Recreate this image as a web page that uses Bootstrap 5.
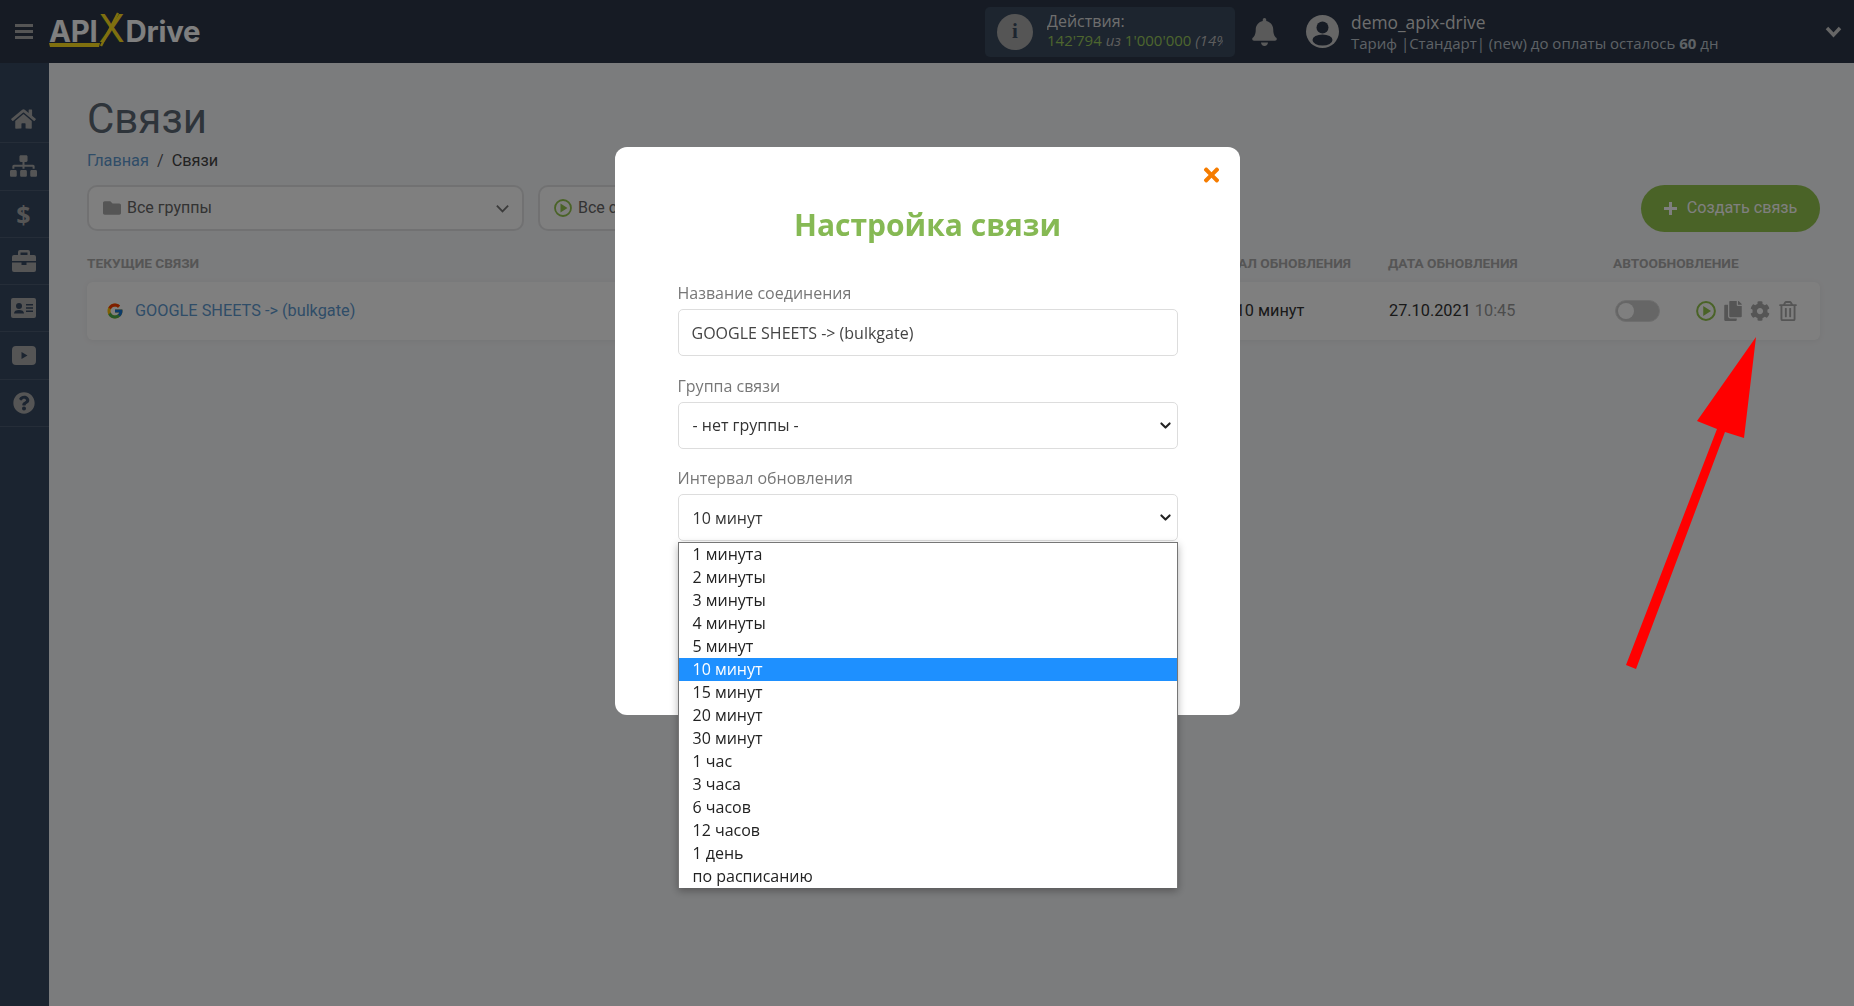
<!DOCTYPE html>
<html lang="ru">
<head>
    <meta charset="UTF-8">
    <title>Связи</title>
    <link href="https://cdn.jsdelivr.net/npm/bootstrap@5.3.0/dist/css/bootstrap.min.css" rel="stylesheet">
    <style>
        body { font-family: Roboto, sans-serif; background: #f7f8fa; height: 1006px; overflow: hidden; }

        /* top bar */
        .top-bar { height: 63px; background: #2c3749; font-family: "Open Sans", sans-serif; }
        .burger { width: 18px; margin-left: 15px; }
        .burger i { display: block; height: 3px; background: #aaa; margin: 3px 0; }
        .logo-box { position: relative; margin-left: 16px; width: 155px; height: 63px; line-height: 63px; color: #fff; font-weight: 700; font-size: 29.4px; font-family: Inter, sans-serif; letter-spacing: -.2px; white-space: nowrap; }
        .logo-x { color: #ffe01f; font-weight: 400; font-size: 38px; line-height: 1; margin: 0 1px; }
        .logo-box svg { position: absolute; left: 0; top: 0; }
        .actions-box { width: 250px; height: 50px; background: #3a4a5e; border-radius: 5px; margin-left: 781px; padding: 0 12px; overflow: hidden; }
        .info-dot { width: 36px; height: 36px; border-radius: 50%; background: #aaa; color: #3a4a5e; font: 700 21px "Liberation Serif", serif; }
        .actions-text { width: 176px; overflow: hidden; white-space: nowrap; margin: 0 0 4px 14px; font-size: 15px; line-height: 20px; color: #ddd; }
        .actions-title { font-size: 16px; line-height: 22px; }
        .actions-count { color: #9ccc5c; margin-top: -2px; }
        .actions-count em { color: #bbb; }
        .bell-icon { margin-left: 17px; width: 25px; height: 28px; fill: #b5b5b5; }
        .avatar-icon { margin-left: 29px; width: 33px; height: 33px; }
        .user-name { font-size: 17.4px; line-height: 22px; color: #ddd; }
        .user-plan { font-size: 15px; line-height: 20px; color: #bcc4cc; white-space: nowrap; }
        .user-box { margin-left: 12px; }
        .user-caret { margin-left: auto; margin-right: 12px; width: 17px; fill: none; stroke: #ccc; stroke-width: 3.4; }

        /* sidebar */
        .side-bar { width: 49px; height: 943px; background: #364860; padding-top: 33px; }
        .side-item { height: 47.3px; padding-right: 2px; border-bottom: 1px solid #4a5a70; color: #aaa; fill: #aaa; font: 700 25px "Open Sans", sans-serif; }

        /* page */
        .page-body { padding: 32px 34px 0 38px; }
        .page-title { font-size: 42px; line-height: 48px; font-weight: 400; color: #5c6875; margin: 0 0 6px 0; }
        .breadcrumb { --bs-breadcrumb-margin-bottom: 0; font-size: 16.3px; line-height: 24px; }
        .breadcrumb a { color: #5f9ad0; text-decoration: none; }
        .breadcrumb-item.active { color: #444; }
        .filter-row { margin-top: 12px; gap: 14px; }
        .filter-box { width: 437px; height: 46px; border: 2px solid #e2e3e5; border-radius: 10px; background: #fff; padding: 0 12px 0 14px; color: #666; font-size: 16px; }
        .filter-box svg.fold { width: 18px; height: 18px; fill: #aaa; margin-right: 6px; }
        .filter-box svg.chev { width: 15px; height: 15px; margin-left: auto; fill: none; stroke: #777; stroke-width: 2; }
        .play-green { width: 18px; height: 18px; margin-right: 6px; }
        .btn-create { width: 179px; height: 47px; background: #94c64e; color: #fff; border-radius: 24px; font-size: 16.2px; border: 0; }
        .btn-create svg { width: 13px; height: 13px; stroke: #fff; stroke-width: 3; margin-right: 10px; }
        .col-head { font-size: 13.7px; font-weight: 700; color: #aaa; line-height: 16px; white-space: nowrap; }
        .list-cols { display: grid; grid-template-columns: 1fr 204px 225px 207px; }
        .head-row { margin-top: 23px; margin-bottom: 11px; }
        .col-int { padding-right: 36px; text-align: center; }
        .conn-row { height: 58px; border: 0; border-radius: 6px; box-shadow: 0 1px 6px rgba(0,0,0,.06); font-size: 16.3px; align-items: center; }
        .conn-name { color: #5f9ad0; padding-left: 19px; }
        .conn-name svg { width: 18px; height: 18px; margin-right: 11px; }
        .conn-int { color: #333; padding-right: 32px; }
        .conn-time { color: #999; }
        .conn-date { color: #333; padding-left: 1px; }
        .toggle-box { width: 45px; height: 22px; border-radius: 11px; background: #ccc; border: 1px solid #ddd; margin-left: 2px; padding: 2px; }
        .toggle-box i { display: block; width: 16px; height: 16px; border-radius: 50%; background: #fff; }
        .row-icons { margin-left: 36px; gap: 7.2px; fill: #aaa; }
        .row-icons svg { width: 20px; height: 20px; }

        /* modal */
        .conn-dialog { max-width: 625px; margin: 147px auto 0; }
        .conn-modal { height: 568px; border: 0; border-radius: 12px; padding: 0 62px 0 63px; font-family: "Open Sans", sans-serif; font-size: 16px; }
        .conn-modal .close-x { position: absolute; right: 20px; top: 17px; width: 17px; height: 22px; fill: #f57c00; }
        .conn-title { color: #86b954; font-size: 30px; font-weight: 700; line-height: 38px; text-align: center; margin: 59px 0 39px; }
        .conn-label { color: #777; margin-bottom: 6px; font-size: 16px; line-height: 20px; display: block; }
        .conn-field { height: 47px; border-radius: 5px; border-color: #ddd; color: #444; font-size: 16px; padding-left: 13px; margin-bottom: 19.5px; }
        .form-select.conn-field { --bs-form-select-bg-img: url("data:image/svg+xml,%3csvg xmlns='http://www.w3.org/2000/svg' viewBox='0 0 16 16'%3e%3cpath fill='none' stroke='%23222' stroke-linecap='round' stroke-linejoin='round' stroke-width='3' d='m2 5 6 6 6-6'/%3e%3c/svg%3e"); background-position: right 5px center; background-size: 13px 11px; color: #333; padding-left: 14px; }
        .interval-wrap { position: relative; }
        .interval-menu { position: absolute; top: 48px; left: 0; width: 100%; padding: 0; margin: 0; border: 1px solid #767676; border-bottom: 0; border-radius: 0; box-shadow: 0 3px 8px rgba(0,0,0,.3); --bs-dropdown-font-size: 16px; }
        .interval-menu .dropdown-item { height: 23px; line-height: 23px; padding: 0 0 0 14px; color: #222; }
        .interval-menu .dropdown-item.active { background: #1e90ff; color: #fff; }

        .red-arrow { position: absolute; left: 1620px; top: 330px; z-index: 1060; }
    </style>
</head>
<body>
<nav class="top-bar d-flex align-items-center">
    <div class="burger"><i></i><i></i><i></i></div>
    <div class="logo-box">API<span class="logo-x">X</span>Drive
        <svg width="155" height="63"><path d="M0 43H51L50 47H1Z" fill="#ffe01f"/><path d="M52 46 L69 13" stroke="#ffe01f" stroke-width="2.4"/></svg>
    </div>
    <div class="actions-box d-flex align-items-center">
        <div class="info-dot d-flex align-items-center justify-content-center flex-shrink-0">i</div>
        <div class="actions-text">
            <div class="actions-title">Действия:</div>
            <div class="actions-count">142'794 <em>из</em> 1'000'000 <em>(14%)</em></div>
        </div>
    </div>
    <svg class="bell-icon" viewBox="0 0 448 512"><path d="M224 512c35.32 0 63.97-28.65 63.97-64H160.03c0 35.35 28.65 64 63.97 64zm215.39-149.71c-19.32-20.76-55.47-51.99-55.47-154.29 0-77.7-54.48-139.9-127.94-155.16V32c0-17.67-14.32-32-31.98-32s-31.98 14.33-31.98 32v20.84C118.56 68.1 64.08 130.3 64.08 208c0 102.3-36.15 133.53-55.47 154.29-6 6.45-8.66 14.16-8.61 21.71.11 16.4 12.98 32 32.1 32h383.8c19.12 0 32-15.6 32.1-32 .05-7.55-2.61-15.27-8.61-21.71z"/></svg>
    <svg class="avatar-icon" viewBox="0 0 33 33"><circle cx="16.5" cy="16.5" r="16.5" fill="#ccc"/><circle cx="16.5" cy="12.5" r="6" fill="#2c3749"/><ellipse cx="16.5" cy="25" rx="10" ry="5.5" fill="#2c3749"/></svg>
    <div class="user-box">
        <div class="user-name">demo_apix-drive</div>
        <div class="user-plan">Тариф |Стандарт| (new) до оплаты осталось <b>60</b> дн</div>
    </div>
    <svg class="user-caret" viewBox="0 0 17 12"><path d="M2 2l6.5 7L15 2"/></svg>
</nav>

<div class="d-flex">
    <div class="side-bar flex-shrink-0">
        <div class="side-item d-flex align-items-center justify-content-center"><svg width="25" height="22" viewBox="0 0 576 512"><path d="M280.37 148.26L96 300.11V464a16 16 0 0 0 16 16l112.06-.29a16 16 0 0 0 15.92-16V368a16 16 0 0 1 16-16h64a16 16 0 0 1 16 16v95.64a16 16 0 0 0 16 16.05L464 480a16 16 0 0 0 16-16V300L295.67 148.26a12.19 12.19 0 0 0-15.3 0zM571.6 251.47L488 182.56V44.05a12 12 0 0 0-12-12h-56a12 12 0 0 0-12 12v72.61L318.47 43a48 48 0 0 0-61 0L4.34 251.47a12 12 0 0 0-1.6 16.9l25.5 31A12 12 0 0 0 45.15 301l235.22-193.74a12.19 12.19 0 0 1 15.3 0L530.9 301a12 12 0 0 0 16.9-1.6l25.5-31a12 12 0 0 0-1.7-16.93z"/></svg></div>
        <div class="side-item d-flex align-items-center justify-content-center"><svg width="27" height="22" viewBox="0 0 640 512"><path d="M128 352H32c-17.67 0-32 14.33-32 32v96c0 17.67 14.33 32 32 32h96c17.67 0 32-14.33 32-32v-96c0-17.67-14.33-32-32-32zm-24-80h192v48h48v-48h192v48h48v-57.59c0-21.17-17.23-38.41-38.41-38.41H344v-64h40c17.67 0 32-14.33 32-32V32c0-17.67-14.33-32-32-32H256c-17.67 0-32 14.33-32 32v96c0 17.67 14.33 32 32 32h40v64H94.41C73.23 224 56 241.23 56 262.41V320h48v-48zm264 80h-96c-17.67 0-32 14.33-32 32v96c0 17.67 14.33 32 32 32h96c17.67 0 32-14.33 32-32v-96c0-17.67-14.33-32-32-32zm240 0h-96c-17.67 0-32 14.33-32 32v96c0 17.67 14.33 32 32 32h96c17.67 0 32-14.33 32-32v-96c0-17.67-14.33-32-32-32z"/></svg></div>
        <div class="side-item d-flex align-items-center justify-content-center">$</div>
        <div class="side-item d-flex align-items-center justify-content-center"><svg width="24" height="22" viewBox="0 0 24 22"><path d="M8 0h8a2 2 0 0 1 2 2v3h4a2 2 0 0 1 2 2v4H0V7a2 2 0 0 1 2-2h4V2a2 2 0 0 1 2-2zm.5 2.5V5h7V2.5zM0 12.5h9.5V15h5v-2.5H24V20a2 2 0 0 1-2 2H2a2 2 0 0 1-2-2z"/></svg></div>
        <div class="side-item d-flex align-items-center justify-content-center"><svg width="25" height="20" viewBox="0 0 25 20"><path fill-rule="evenodd" d="M2 0h21a2 2 0 0 1 2 2v16a2 2 0 0 1-2 2H2a2 2 0 0 1-2-2V2a2 2 0 0 1 2-2zm6 5a3 3 0 1 0 0 6 3 3 0 0 0 0-6zm-5 10.500h10c0-2.500-2-3.500-5-3.500s-5 1-5 3.500zM15 6v1.400h7V6zm0 3.300v1.400h7V9.300zm0 3.300V14h7v-1.400z"/></svg></div>
        <div class="side-item d-flex align-items-center justify-content-center"><svg width="24" height="19" viewBox="0 0 24 19"><path fill-rule="evenodd" d="M4 0h16a4 4 0 0 1 4 4v11a4 4 0 0 1-4 4H4a4 4 0 0 1-4-4V4a4 4 0 0 1 4-4zm5.500 6v7l6-3.500z"/></svg></div>
        <div class="side-item d-flex align-items-center justify-content-center"><svg width="22" height="22" viewBox="0 0 512 512"><path d="M504 256c0 136.997-111.043 248-248 248S8 392.997 8 256C8 119.083 119.043 8 256 8s248 111.083 248 248zM262.655 90c-54.497 0-89.255 22.957-116.549 63.758-3.536 5.286-2.353 12.415 2.715 16.258l34.699 26.31c5.205 3.947 12.621 3.008 16.665-2.122 17.864-22.658 30.113-35.797 57.303-35.797 20.429 0 45.698 13.148 45.698 32.958 0 14.976-12.363 22.667-32.534 33.976C247.128 238.528 216 254.941 216 296v4c0 6.627 5.373 12 12 12h56c6.627 0 12-5.373 12-12v-1.333c0-28.462 83.186-29.647 83.186-106.667 0-58.002-60.165-102-116.531-102zM256 338c-25.365 0-46 20.635-46 46 0 25.364 20.635 46 46 46s46-20.636 46-46c0-25.365-20.635-46-46-46z"/></svg></div>
    </div>

    <main class="page-body flex-grow-1">
        <h1 class="page-title">Связи</h1>
        <ol class="breadcrumb">
            <li class="breadcrumb-item"><a href="#">Главная</a></li>
            <li class="breadcrumb-item active">Связи</li>
        </ol>

        <div class="d-flex filter-row">
            <div class="filter-box d-flex align-items-center">
                <svg class="fold" viewBox="0 0 512 512"><path d="M464 128H272l-64-64H48C21.49 64 0 85.49 0 112v288c0 26.51 21.49 48 48 48h416c26.51 0 48-21.49 48-48V176c0-26.51-21.49-48-48-48z"/></svg>
                Все группы
                <svg class="chev" viewBox="0 0 16 16"><path d="M2 5l6 6 6-6"/></svg>
            </div>
            <div class="filter-box d-flex align-items-center">
                <svg class="play-green" viewBox="0 0 18 18"><circle cx="9" cy="9" r="8" fill="none" stroke="#94c64e" stroke-width="1.800"/><path d="M6.500 4.500v9l7-4.500z" fill="#94c64e"/></svg>
                Все статусы
            </div>
            <button class="btn-create ms-auto d-flex align-items-center justify-content-center" type="button">
                <svg viewBox="0 0 13 13"><path d="M6.500 0v13M0 6.500h13"/></svg>Создать связь
            </button>
        </div>

        <div class="list-cols head-row">
            <div class="col-head">ТЕКУЩИЕ СВЯЗИ</div>
            <div class="col-head col-int">ИНТЕРВАЛ ОБНОВЛЕНИЯ</div>
            <div class="col-head">ДАТА ОБНОВЛЕНИЯ</div>
            <div class="col-head">АВТООБНОВЛЕНИЕ</div>
        </div>
        <div class="card conn-row list-cols">
            <div class="conn-name d-flex align-items-center">
                <svg viewBox="0 0 48 48"><path fill="#FFC107" d="M43.611 20.083H42V20H24v8h11.303c-1.649 4.657-6.08 8-11.303 8-6.627 0-12-5.373-12-12s5.373-12 12-12c3.059 0 5.842 1.154 7.961 3.039l5.657-5.657C34.046 6.053 29.268 4 24 4 12.955 4 4 12.955 4 24s8.955 20 20 20 20-8.955 20-20c0-1.341-.138-2.650-.389-3.917z"/><path fill="#FF3D00" d="M6.306 14.691l6.571 4.819C14.655 15.108 18.961 12 24 12c3.059 0 5.842 1.154 7.961 3.039l5.657-5.657C34.046 6.053 29.268 4 24 4 16.318 4 9.656 8.337 6.306 14.691z"/><path fill="#4CAF50" d="M24 44c5.166 0 9.860-1.977 13.409-5.192l-6.190-5.238A11.910 11.910 0 0 1 24 36c-5.202 0-9.619-3.317-11.283-7.946l-6.522 5.025C9.505 39.556 16.227 44 24 44z"/><path fill="#1976D2" d="M43.611 20.083H42V20H24v8h11.303a12.040 12.040 0 0 1-4.087 5.571l.003-.002 6.190 5.238C36.971 39.205 44 34 44 24c0-1.341-.138-2.650-.389-3.917z"/></svg>
                GOOGLE SHEETS -&gt; (bulkgate)
            </div>
            <div class="col-int conn-int">10 минут</div>
            <div class="conn-date">27.10.2021 <span class="conn-time">10:45</span></div>
            <div class="d-flex align-items-center">
                <div class="toggle-box"><i></i></div>
                <div class="row-icons d-flex align-items-center">
                    <svg viewBox="0 0 18 18"><circle cx="9" cy="9" r="8" fill="none" stroke="#94c64e" stroke-width="1.800"/><path d="M6.500 4.500v9l7-4.500z" fill="#94c64e"/></svg>
                    <svg viewBox="0 0 448 512"><path d="M320 448v40c0 13.255-10.745 24-24 24H24c-13.255 0-24-10.745-24-24V120c0-13.255 10.745-24 24-24h72v296c0 30.879 25.121 56 56 56h168zm0-344V0H152c-13.255 0-24 10.745-24 24v368c0 13.255 10.745 24 24 24h272c13.255 0 24-10.745 24-24V128H344c-13.200 0-24-10.800-24-24zm120.971-31.029L375.029 7.029A24 24 0 0 0 358.059 0H352v96h96v-6.059a24 24 0 0 0-7.029-16.970z"/></svg>
                    <svg viewBox="0 0 512 512"><path d="M487.400 315.700l-42.600-24.600c4.300-23.200 4.300-47 0-70.200l42.600-24.600c4.900-2.800 7.100-8.600 5.500-14-11.100-35.600-30-67.800-54.700-94.600-3.800-4.100-10-5.100-14.800-2.300L380.800 110c-17.900-15.400-38.500-27.300-60.800-35.100V25.800c0-5.600-3.900-10.500-9.400-11.700-36.700-8.200-74.300-7.800-109.200 0-5.500 1.200-9.400 6.100-9.400 11.700V75c-22.200 7.900-42.800 19.800-60.800 35.100L88.700 85.500c-4.900-2.800-11-1.900-14.800 2.300-24.700 26.700-43.600 58.900-54.700 94.600-1.700 5.400.6 11.200 5.500 14L67.300 221c-4.300 23.200-4.300 47 0 70.200l-42.600 24.600c-4.900 2.800-7.100 8.600-5.500 14 11.100 35.600 30 67.800 54.700 94.600 3.800 4.100 10 5.100 14.800 2.300l42.600-24.600c17.900 15.400 38.500 27.300 60.800 35.100v49.200c0 5.600 3.900 10.500 9.400 11.700 36.700 8.200 74.300 7.800 109.200 0 5.500-1.200 9.400-6.100 9.400-11.700v-49.200c22.200-7.900 42.800-19.800 60.800-35.100l42.600 24.600c4.900 2.800 11 1.900 14.800-2.300 24.700-26.700 43.600-58.900 54.700-94.600 1.500-5.500-.7-11.300-5.600-14.100zM256 336c-44.100 0-80-35.900-80-80s35.900-80 80-80 80 35.900 80 80-35.900 80-80 80z"/></svg>
                    <svg viewBox="0 0 448 512"><path d="M268 416h24a12 12 0 0 0 12-12V188a12 12 0 0 0-12-12h-24a12 12 0 0 0-12 12v216a12 12 0 0 0 12 12zM432 80h-82.410l-34-56.700A48 48 0 0 0 274.410 0H173.590a48 48 0 0 0-41.160 23.300L98.410 80H16A16 16 0 0 0 0 96v16a16 16 0 0 0 16 16h16v336a48 48 0 0 0 48 48h288a48 48 0 0 0 48-48V128h16a16 16 0 0 0 16-16V96a16 16 0 0 0-16-16zM171.840 50.910A6 6 0 0 1 177 48h94a6 6 0 0 1 5.150 2.910L293.610 80H154.390zM368 464H80V128h288zm-212-48h24a12 12 0 0 0 12-12V188a12 12 0 0 0-12-12h-24a12 12 0 0 0-12 12v216a12 12 0 0 0 12 12z"/></svg>
                </div>
            </div>
        </div>
    </main>
</div>

<div class="modal-backdrop fade show"></div>

<div class="modal d-block" tabindex="-1">
    <div class="modal-dialog conn-dialog">
        <div class="modal-content conn-modal">
            <svg class="close-x" viewBox="0 0 352 512"><path d="M242.720 256l100.070-100.070c12.280-12.280 12.280-32.190 0-44.480l-22.240-22.240c-12.280-12.280-32.190-12.280-44.480 0L176 189.280 75.930 89.210c-12.280-12.280-32.190-12.280-44.480 0L9.210 111.450c-12.280 12.280-12.280 32.190 0 44.480L109.280 256 9.210 356.070c-12.280 12.280-12.280 32.190 0 44.480l22.240 22.240c12.280 12.280 32.200 12.280 44.480 0L176 322.720l100.070 100.070c12.280 12.280 32.200 12.280 44.480 0l22.240-22.240c12.280-12.280 12.280-32.190 0-44.480L242.720 256z"/></svg>
            <h2 class="conn-title">Настройка связи</h2>
            <label class="conn-label">Название соединения</label>
            <input class="form-control conn-field" type="text" value="GOOGLE SHEETS -> (bulkgate)">
            <label class="conn-label">Группа связи</label>
            <select class="form-select conn-field"><option>- нет группы -</option></select>
            <label class="conn-label">Интервал обновления</label>
            <div class="interval-wrap">
                <select class="form-select conn-field"><option>10 минут</option></select>
                <ul class="dropdown-menu show interval-menu">
                    <li><a class="dropdown-item" href="#">1 минута</a></li>
                    <li><a class="dropdown-item" href="#">2 минуты</a></li>
                    <li><a class="dropdown-item" href="#">3 минуты</a></li>
                    <li><a class="dropdown-item" href="#">4 минуты</a></li>
                    <li><a class="dropdown-item" href="#">5 минут</a></li>
                    <li><a class="dropdown-item active" href="#">10 минут</a></li>
                    <li><a class="dropdown-item" href="#">15 минут</a></li>
                    <li><a class="dropdown-item" href="#">20 минут</a></li>
                    <li><a class="dropdown-item" href="#">30 минут</a></li>
                    <li><a class="dropdown-item" href="#">1 час</a></li>
                    <li><a class="dropdown-item" href="#">3 часа</a></li>
                    <li><a class="dropdown-item" href="#">6 часов</a></li>
                    <li><a class="dropdown-item" href="#">12 часов</a></li>
                    <li><a class="dropdown-item" href="#">1 день</a></li>
                    <li><a class="dropdown-item" href="#">по расписанию</a></li>
                </ul>
            </div>
        </div>
    </div>
</div>

<svg class="red-arrow" width="150" height="345" viewBox="1620 330 150 345"><path d="M1756 337 1697 421 1717 429 1626 665 1636 669 1725 432 1744 438Z" fill="#ff0000"/></svg>

<script src="https://cdn.jsdelivr.net/npm/bootstrap@5.3.0/dist/js/bootstrap.bundle.min.js"></script>
</body>
</html>
